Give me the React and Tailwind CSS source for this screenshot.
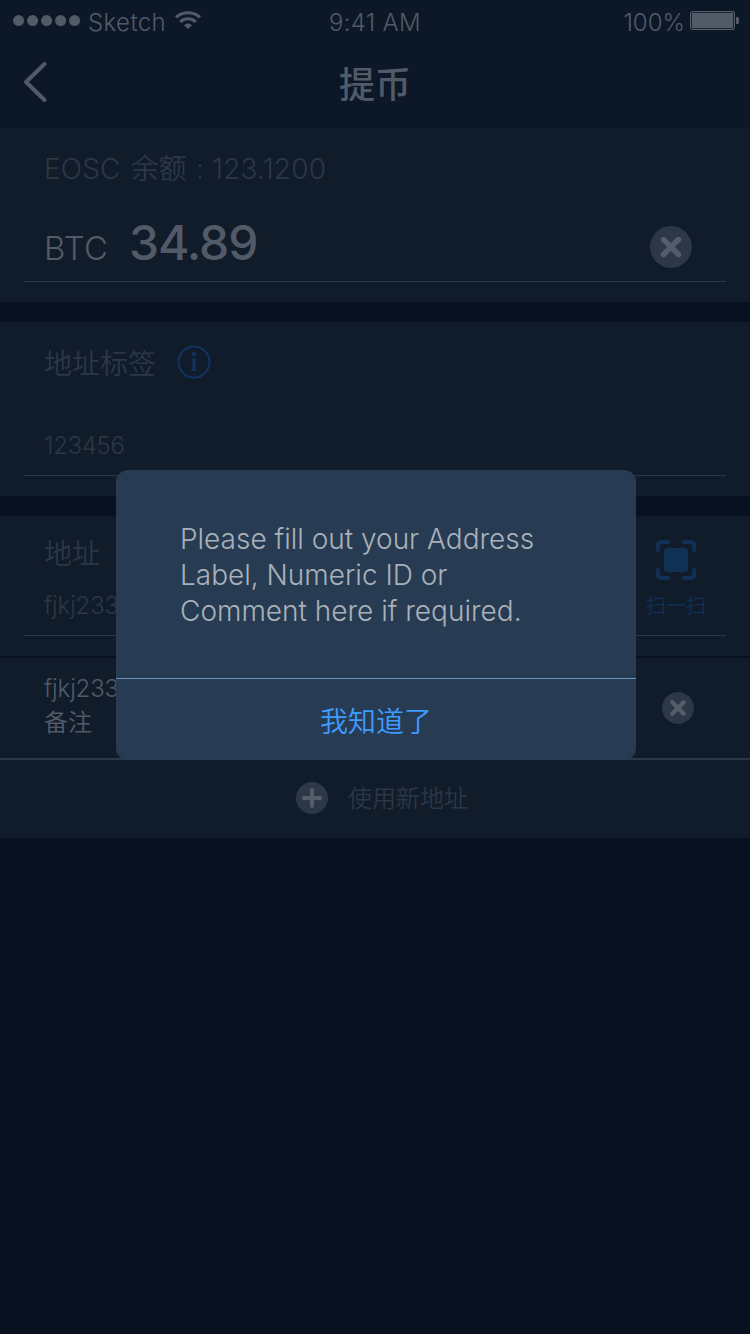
import React from "react";

function ClearIcon({ className }) {
  return (
    <svg viewBox="0 0 42 42" className={className}>
      <circle cx="21" cy="21" r="21" fill="#2c3847" />
      <path d="M13.500 13.500L28.500 28.500M28.500 13.500L13.500 28.500" stroke="#555d6a" strokeWidth="5.4" strokeLinecap="round" />
    </svg>
  );
}

function StatusBar() {
  return (
    <div className="grid h-10 grid-cols-3 pt-[10px] text-[24px] leading-[26px] text-[#525a67]">
      <div className="flex items-start pl-[13px]">
        <svg viewBox="0 0 68 12" className="mt-[5px] h-3 w-[68px] shrink-0" fill="#525a67">
          <circle cx="5.6" cy="5.6" r="5.5" />
          <circle cx="19.6" cy="5.6" r="5.5" />
          <circle cx="33.6" cy="5.6" r="5.5" />
          <circle cx="47.6" cy="5.6" r="5.5" />
          <circle cx="61.6" cy="5.6" r="5.5" />
        </svg>
        <span className="ml-[7px] w-[87px] tracking-[0.400px]">Sketch</span>
        <svg viewBox="0 0 26 18" className="mt-[1px] h-[18px] w-[26px] shrink-0" fill="none" stroke="#525a67" strokeWidth="3">
          <path d="M1 6.400C7.600 0.200 18.400 0.200 25 6.400" />
          <path d="M5.200 10.900C9.600 6.800 16.400 6.800 20.800 10.900" />
          <path d="M9 14.300C11.200 11.900 14.800 11.900 17 14.300L13 18Z" fill="#525a67" stroke="none" />
        </svg>
      </div>
      <div className="text-center tracking-[0.300px]">9:41 AM</div>
      <div className="flex items-start justify-end pr-[11px]">
        <span className="mr-[5px]">100%</span>
        <svg viewBox="0 0 49 19" className="mt-[1px] h-[19px] w-[49px] shrink-0">
          <rect x="0.600" y="0.600" width="43.800" height="17.800" rx="2.500" fill="none" stroke="#525a67" strokeWidth="1.200" />
          <rect x="2" y="2" width="41" height="15" rx="1" fill="#525a67" />
          <path d="M46 6h1.500q1.500 0 1.500 1.500v4q0 1.500-1.500 1.500H46z" fill="#525a67" />
        </svg>
      </div>
    </div>
  );
}

function Header() {
  return (
    <header className="h-32 bg-[#0c1827]">
      <StatusBar />
      <div className="grid h-[84px] grid-cols-[1fr_auto_1fr] items-center pl-6">
        <svg viewBox="0 0 24 42" className="h-[42px] w-6" fill="none" stroke="#525a67" strokeWidth="4" strokeLinecap="round" strokeLinejoin="round">
          <path d="M20.500 3L2 21L20.500 39" />
        </svg>
        <h1 className="pr-6 pt-[6px] text-[36px] font-medium leading-[50px] text-[#525a67]">提币</h1>
      </div>
    </header>
  );
}

function Balance() {
  return (
    <section className="h-[174px] bg-[#111c2b] px-6 pt-[21px]">
      <p className="pl-5 text-[28px] leading-10 tracking-[0.150px] text-[#2b3746]">
        EOSC <span className="ml-[2px]">余额</span> <span className="ml-px">:</span> 123.1200
      </p>
      <div className="flex h-[93px] items-baseline border-b border-[#2c3847] pl-5 pr-[34px] pt-[24px]">
        <span className="w-[85px] text-[33px] leading-[60px] tracking-[0.200px] text-[#525a67]">BTC</span>
        <span className="flex-1 text-[48px] font-medium leading-[60px] tracking-[-1.100px] text-[#525a67]">34.89</span>
        <ClearIcon className="mt-[13px] h-[42px] w-[42px] self-start" />
      </div>
    </section>
  );
}

function AddressLabel() {
  return (
    <section className="mt-5 h-[174px] bg-[#111c2b] px-6 pt-5">
      <div className="flex h-10 items-center gap-[21px] pl-5">
        <span className="pt-[3px] text-[28px] leading-10 text-[#2b3746]">地址标签</span>
        <svg viewBox="0 0 34 34" className="h-[34px] w-[34px]">
          <circle cx="17" cy="17" r="15.500" fill="none" stroke="#123264" strokeWidth="2" />
          <circle cx="17" cy="9.200" r="2.100" fill="#123264" />
          <path d="M14 13.600L18.500 13V24L20 25.300V26H14V25.300L15.500 24V14.500L14 14.300z" fill="#123264" />
        </svg>
      </div>
      <div className="h-[94px] border-b border-[#2c3847] pl-5 pt-[47px]">
        <span className="block text-[24px] leading-[34px] tracking-[-0.300px] text-[#2b3746]">123456</span>
      </div>
    </section>
  );
}

function Address() {
  return (
    <section className="mt-5 h-[140px] bg-[#111c2b] px-6 pt-4">
      <div className="flex h-[104px] justify-between border-b border-[#2c3847] pl-5 pr-5">
        <div className="pt-[2px]">
          <p className="text-[28px] leading-10 text-[#2b3746]">地址</p>
          <p className="mt-[15px] text-[24px] leading-[34px] tracking-[-0.150px] text-[#2b3746]">fjkj23323</p>
        </div>
        <div className="flex flex-col items-center pt-2 text-[#113055]">
          <svg viewBox="0 0 40 40" className="h-10 w-10" fill="none" stroke="currentColor" strokeWidth="4" strokeLinecap="round">
            <path d="M2 10V5q0-3 3-3H12M28 2H35q3 0 3 3V10M38 30V35q0 3-3 3H28M12 38H5q-3 0-3-3V30" />
            <rect x="8" y="8" width="24" height="24" rx="3.500" fill="currentColor" stroke="none" />
          </svg>
          <span className="mt-3 text-[20px] leading-7">扫一扫</span>
        </div>
      </div>
    </section>
  );
}

function SavedAddress() {
  return (
    <section className="mt-[2px] flex h-[102px] items-start justify-between border-b-2 border-[#2c3847] bg-[#111c2b] pl-11 pr-14 pt-[13px] text-[24px] leading-[34px] text-[#525a67]">
      <div>
        <p className="pt-px tracking-[-0.150px]">fjkj23323</p>
        <p>备注</p>
      </div>
      <ClearIcon className="mt-[21px] h-8 w-8" />
    </section>
  );
}

function NewAddress() {
  return (
    <section className="flex h-[78px] items-center bg-[#111c2b] pb-[2px] pl-[296px]">
      <svg viewBox="0 0 32 32" className="h-8 w-8">
        <circle cx="16" cy="16" r="16" fill="#2c3847" />
        <path d="M16 8V24M8 16H24" stroke="#555d6a" strokeWidth="4" strokeLinecap="round" />
      </svg>
      <span className="ml-5 pt-[2px] text-[24px] leading-[34px] text-[#2b3746]">使用新地址</span>
    </section>
  );
}

function Dialog() {
  return (
    <div role="dialog" className="absolute left-[116px] top-[470px] h-[290px] w-[520px] overflow-hidden rounded-[12px] bg-[#273c53]">
      <div className="h-[209px] border-b border-[#6d94c2] pl-16 pt-[51px] text-[28px] leading-9 text-[#a9b1ba]">
        <p>Please fill out your Address</p>
        <p>Label, Numeric ID or</p>
        <p>Comment here if required.</p>
      </div>
      <button className="block h-[81px] w-full text-center text-[28px] leading-[86px] text-[#3e9bff]">我知道了</button>
    </div>
  );
}

export default function App() {
  return (
    <main className="relative h-[1334px] w-[750px] overflow-hidden bg-[#07111f] font-['Inter','Noto_Sans_CJK_SC',sans-serif] font-[350]">
      <Header />
      <Balance />
      <AddressLabel />
      <Address />
      <SavedAddress />
      <NewAddress />
      <Dialog />
    </main>
  );
}
